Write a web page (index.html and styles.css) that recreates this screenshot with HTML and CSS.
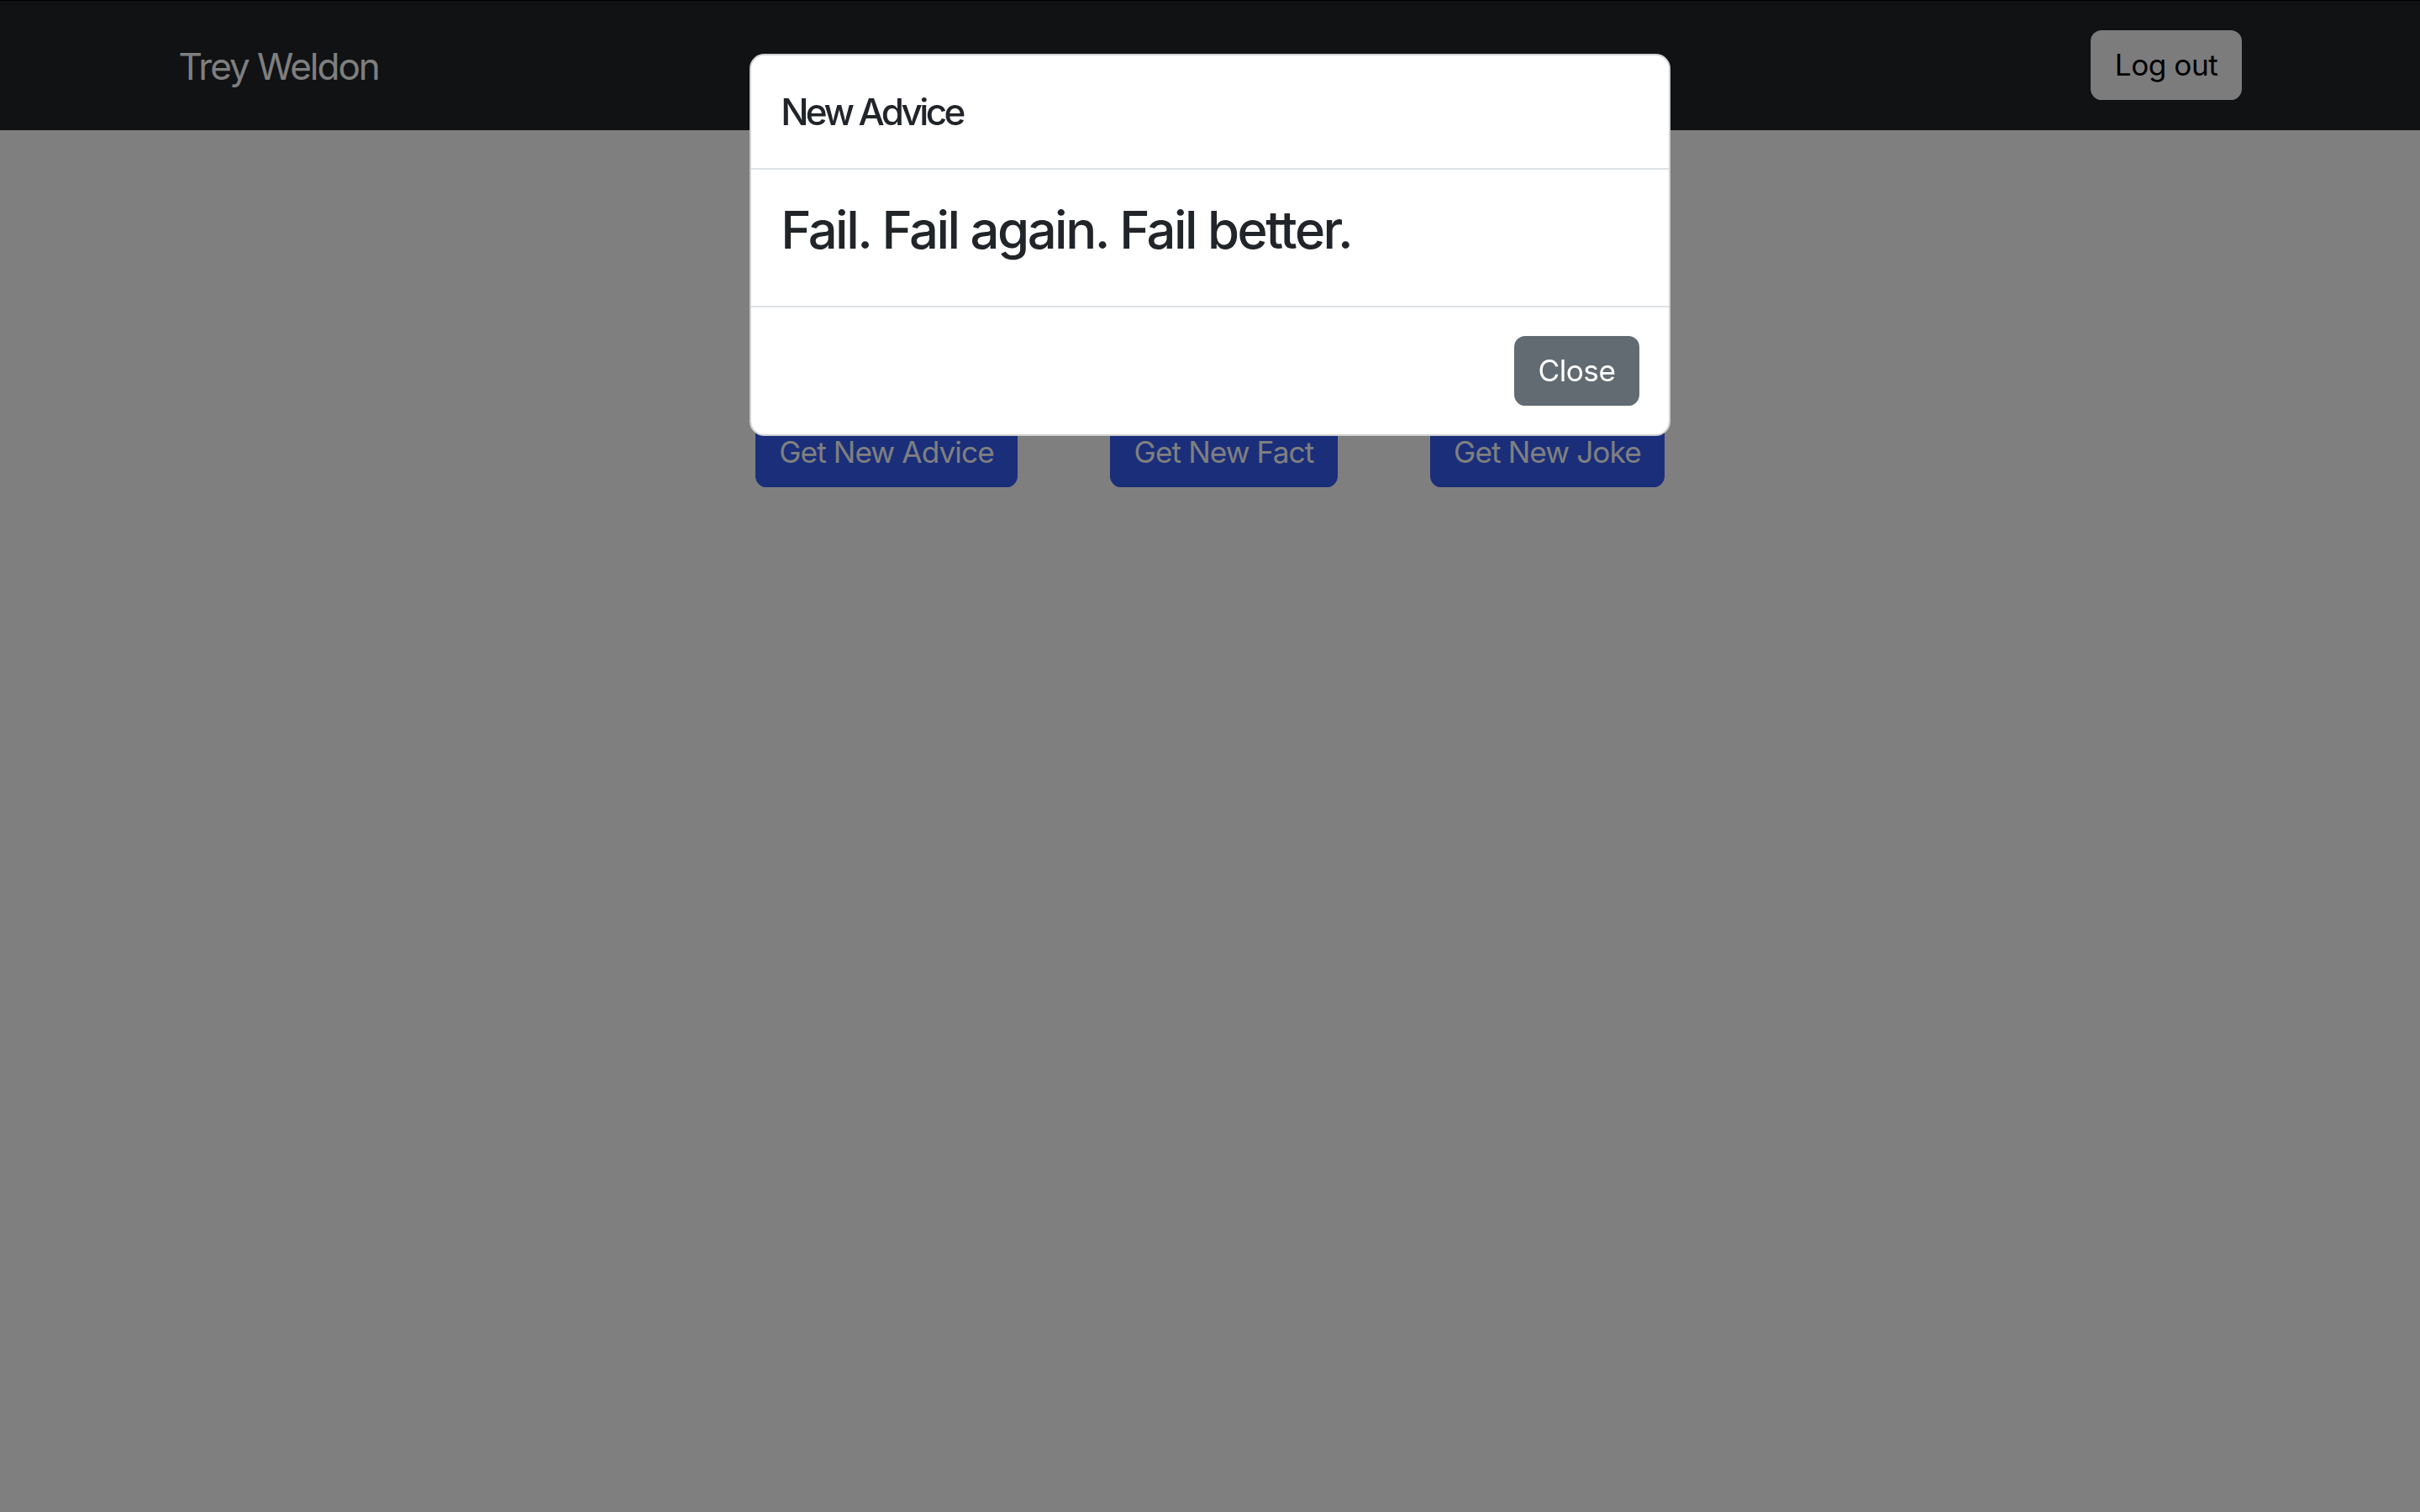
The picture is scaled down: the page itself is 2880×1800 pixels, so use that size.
FILE: index.html
```html
<!DOCTYPE html>
<html lang="en">
<head>
<meta charset="utf-8">
<title>Trey Weldon</title>
<link rel="stylesheet" href="styles.css">
</head>
<body>
<nav class="navbar">
  <div class="container nav-inner">
    <a class="brand" href="#">Trey Weldon</a>
    <button class="btn btn-light">Log out</button>
  </div>
</nav>
<main class="main">
  <div class="actions">
    <button class="btn btn-primary">Get New Advice</button>
    <button class="btn btn-primary">Get New Fact</button>
    <button class="btn btn-primary">Get New Joke</button>
  </div>
</main>
<div class="backdrop"></div>
<div class="modal" role="dialog">
  <div class="modal-header">
    <h5 class="modal-title">New Advice</h5>
  </div>
  <div class="modal-body">
    <h3 class="advice">Fail. Fail again. Fail better.</h3>
  </div>
  <div class="modal-footer">
    <button class="btn btn-secondary">Close</button>
  </div>
</div>
</body>
</html>
```
FILE: styles.css
```css
* { box-sizing: border-box; }
html, body { margin: 0; padding: 0; }
body {
  font-family: Inter, "Noto Sans", "Liberation Sans", sans-serif;
  font-size: 35.2px;
  line-height: 1.5;
  color: #212529;
  background: #fff;
  width: 2880px;
  height: 1800px;
  overflow: hidden;
}
.navbar {
  background: #212529;
  padding: 35.2px 0;
  border-top: 1px solid #000;
}
.container {
  max-width: 2508px;
  margin: 0 auto;
  padding: 0 26.4px;
}
.nav-inner {
  display: flex;
  justify-content: space-between;
  align-items: center;
}
.brand {
  color: #fff;
  text-decoration: none;
  font-size: 44px;
  line-height: 1.5;
  letter-spacing: -2px;
  margin-top: 2px;
}
.btn {
  font-family: inherit;
  font-size: 35.2px;
  line-height: 1.5;
  padding: 13.2px 26.4px;
  border: 2.2px solid transparent;
  border-radius: 13.2px;
  cursor: pointer;
  letter-spacing: -0.9px;
}
.btn-light { background: #f8f9fa; color: #000; border-color: #f8f9fa; letter-spacing: -0.5px; }
.btn-primary { background: #345cf4; color: #fff; border-color: #345cf4; }
.btn-secondary { background: #636b72; color: #fff; border-color: #636b72; letter-spacing: -0.5px; }
.main {
  padding-top: 342px;
}
.actions {
  display: flex;
  justify-content: center;
  gap: 110px;
}
.backdrop {
  position: fixed;
  inset: 0;
  background: rgba(0, 0, 0, 0.5);
}
.modal {
  position: fixed;
  top: 64px;
  left: 892px;
  width: 1096px;
  background: #fff;
  border: 2px solid rgba(0, 0, 0, 0.175);
  border-radius: 17.6px;
  overflow: hidden;
}
.modal-header {
  padding: 34px 35.2px;
  border-bottom: 2.2px solid #dee2e6;
}
.modal-title {
  margin: 0;
  font-size: 44px;
  font-weight: 500;
  line-height: 1.5;
  letter-spacing: -3.6px;
}
.modal-body {
  padding: 35.2px;
}
.advice {
  margin: 0 0 17.6px;
  font-size: 61.6px;
  font-weight: 500;
  line-height: 1.2;
  letter-spacing: -2.5px;
}
.modal-footer {
  display: flex;
  justify-content: flex-end;
  padding: 25px 26.4px;
  border-top: 2.2px solid #dee2e6;
}
.modal-footer .btn { margin: 8.8px; }
```
